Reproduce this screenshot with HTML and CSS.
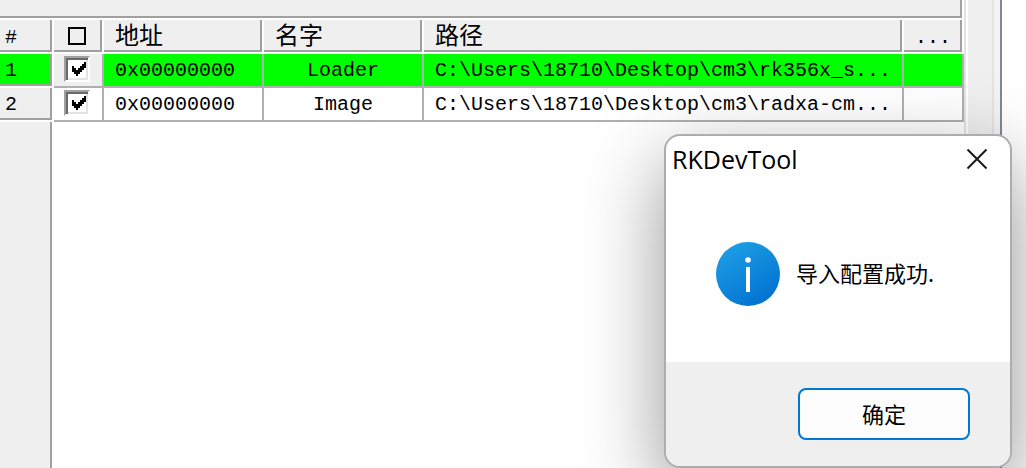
FILE: index.html
```
<!DOCTYPE html>
<html lang="zh-CN">
<head>
<meta charset="utf-8">
<title>RKDevTool</title>
<link rel="stylesheet" href="styles.css">
</head>
<body>
<div class="window">
  <main class="panel">
    <div class="panel-top"></div>
    <table class="grid">
      <colgroup>
        <col class="col-index"><col class="col-check"><col class="col-address">
        <col class="col-name"><col class="col-path"><col class="col-more">
      </colgroup>
      <thead>
        <tr>
          <th class="index">#</th>
          <th class="check"><input class="check-all" type="checkbox" aria-label="全选"></th>
          <th>地址</th>
          <th>名字</th>
          <th>路径</th>
          <th class="more">...</th>
        </tr>
      </thead>
      <tbody>
        <tr class="active">
          <td class="index">1</td>
          <td class="check"><input class="tick" type="checkbox" aria-label="Loader" checked></td>
          <td>0x00000000</td>
          <td class="name">Loader</td>
          <td>C:\Users\18710\Desktop\cm3\rk356x_s...</td>
          <td></td>
        </tr>
        <tr>
          <td class="index">2</td>
          <td class="check"><input class="tick" type="checkbox" aria-label="Image" checked></td>
          <td>0x00000000</td>
          <td class="name">Image</td>
          <td>C:\Users\18710\Desktop\cm3\radxa-cm...</td>
          <td></td>
        </tr>
      </tbody>
    </table>
    <div class="gutter"></div>
  </main>
  <div class="edge"></div>
</div>

<section class="dialog" role="dialog" aria-labelledby="dialog-title">
  <header class="dialog-head">
    <h1 id="dialog-title">RKDevTool</h1>
    <button class="close" type="button" aria-label="关闭">
      <svg width="22" height="22" viewBox="0 0 22 22"><path d="M1.500 1.500 20.500 20.500M20.500 1.500 1.500 20.500" fill="none" stroke="#1a1a1a" stroke-width="2"/></svg>
    </button>
  </header>
  <div class="dialog-body">
    <svg class="info" width="64" height="64" viewBox="0 0 64 64" aria-hidden="true">
      <defs><linearGradient id="blue" x1="0.2" y1="0" x2="0.8" y2="1"><stop offset="0" stop-color="#1f9fe5"/><stop offset="1" stop-color="#006fd0"/></linearGradient></defs>
      <circle cx="32" cy="32" r="32" fill="url(#blue)"/>
      <circle cx="32" cy="18" r="2.800" fill="#fff"/>
      <path d="M30 25h4v25h-4z" fill="#fff"/>
    </svg>
    <p>导入配置成功.</p>
  </div>
  <footer class="dialog-foot"><button class="ok" type="button">确定</button></footer>
</section>
</body>
</html>
```
FILE: styles.css
```
* { box-sizing: border-box; }
body {
  margin: 0;
  min-height: 100vh;
  position: relative;
  overflow: hidden;
  background: #fff;
  color: #000;
  font-family: "Liberation Mono", "Noto Sans CJK SC", monospace;
}
.window {
  display: flex;
  min-height: 100vh;
  padding-right: 24px;
}
.panel {
  flex: 1;
  min-width: 0;
  display: flex;
  flex-direction: column;
}
.panel-top {
  height: 20px;
  background: #efefef;
  border-right: 2px solid #fff;
  border-bottom: 2px solid #fff;
  box-shadow: inset -2px -2px #a0a0a0;
}
.edge {
  width: 38px;
  border-left: 2px solid #e3e3e3;
  border-right: 2px solid #808893;
  background: linear-gradient(to right, #fff 2px, #efefef 2px, #efefef 26px, #e3e3e3 26px, #e3e3e3 28px, #f3f3f3 28px);
}
.grid {
  width: 100%;
  table-layout: fixed;
  border-collapse: separate;
  border-spacing: 0;
  font-size: 20px;
  line-height: 30px;
}
.col-index { width: 54px; }
.col-check { width: 50px; }
.col-address, .col-name { width: 160px; }
.col-more { width: 60px; }
.grid th, .grid td {
  height: 34px;
  padding: 2px 0 0 11px;
  text-align: left;
  font-weight: 400;
  white-space: nowrap;
  overflow: hidden;
}
.grid td {
  border-right: 2px solid #b0b0b0;
  border-bottom: 2px solid #b0b0b0;
}
.grid th, .grid .index {
  background: #efefef;
  border-right: 2px solid #fff;
  border-bottom: 2px solid #fff;
  box-shadow: inset -2px -2px #a0a0a0;
}
.grid th {
  padding-top: 4px;
  font-size: 24px;
  line-height: 28px;
}
.grid th.index, .grid th.more { font-size: 20px; }
.grid .index { padding-left: 5px; }
.grid .check {
  padding: 0 2px 0 0;
  text-align: center;
}
.grid td.name {
  padding-left: 0;
  text-align: center;
}
.grid .active td { background: #0f0; }
.grid .active td.check { background: #efefef; }
.check-all, .tick {
  appearance: none;
  display: block;
  margin: 0 auto;
}
.check-all {
  width: 18px;
  height: 18px;
  border: 2px solid #000;
}
.tick {
  width: 26px;
  height: 26px;
  margin-bottom: 2px;
  padding: 2px;
  background: #fff;
  border: 2px solid;
  border-color: #a0a0a0 #fff #fff #a0a0a0;
  box-shadow: inset 2px 2px #696969, inset -2px -2px #e3e3e3;
}
.tick:checked::before {
  content: "";
  display: block;
  width: 14px;
  height: 14px;
  margin: 2px 0 0 4px;
  background: #000;
  clip-path: polygon(0 4px, 2px 4px, 2px 6px, 4px 6px, 4px 8px, 6px 8px, 6px 6px, 8px 6px, 8px 4px, 10px 4px, 10px 2px, 12px 2px, 12px 0, 14px 0, 14px 6px, 12px 6px, 12px 8px, 10px 8px, 10px 10px, 8px 10px, 8px 12px, 6px 12px, 6px 14px, 4px 14px, 4px 12px, 2px 12px, 2px 10px, 0 10px);
}
.gutter {
  flex: 1;
  width: 52px;
  background: #efefef;
  border-right: 2px solid #a0a0a0;
}
.dialog {
  position: absolute;
  right: 14px;
  bottom: 0;
  width: 348px;
  border: 2px solid #adadad;
  border-radius: 16px;
  overflow: hidden;
  background: #fff;
  box-shadow: 0 28px 80px rgba(0, 0, 0, 0.42);
  font-family: "Noto Sans CJK SC", sans-serif;
}
.dialog-head {
  display: flex;
  align-items: center;
  justify-content: space-between;
  height: 46px;
  padding: 0 22px 0 6px;
}
.dialog-head h1 {
  margin: 0;
  font: 400 25px/46px "Open Sans", sans-serif;
}
.close {
  display: flex;
  padding: 0;
  border: 0;
  background: none;
}
.dialog-body {
  display: flex;
  align-items: center;
  gap: 16px;
  height: 180px;
  padding: 4px 50px 0;
}
.dialog-body p {
  margin: 0;
  padding-bottom: 4px;
  font-size: 22px;
  line-height: 32px;
  white-space: nowrap;
}
.dialog-foot {
  display: flex;
  justify-content: flex-end;
  padding: 26px 40px;
  background: #efefef;
}
.ok {
  width: 172px;
  height: 52px;
  padding: 0 0 2px;
  border: 2px solid #0078d4;
  border-radius: 8px;
  background: #fdfdfd;
  color: #000;
  font: 400 22px/32px "Noto Sans CJK SC", sans-serif;
}
```
